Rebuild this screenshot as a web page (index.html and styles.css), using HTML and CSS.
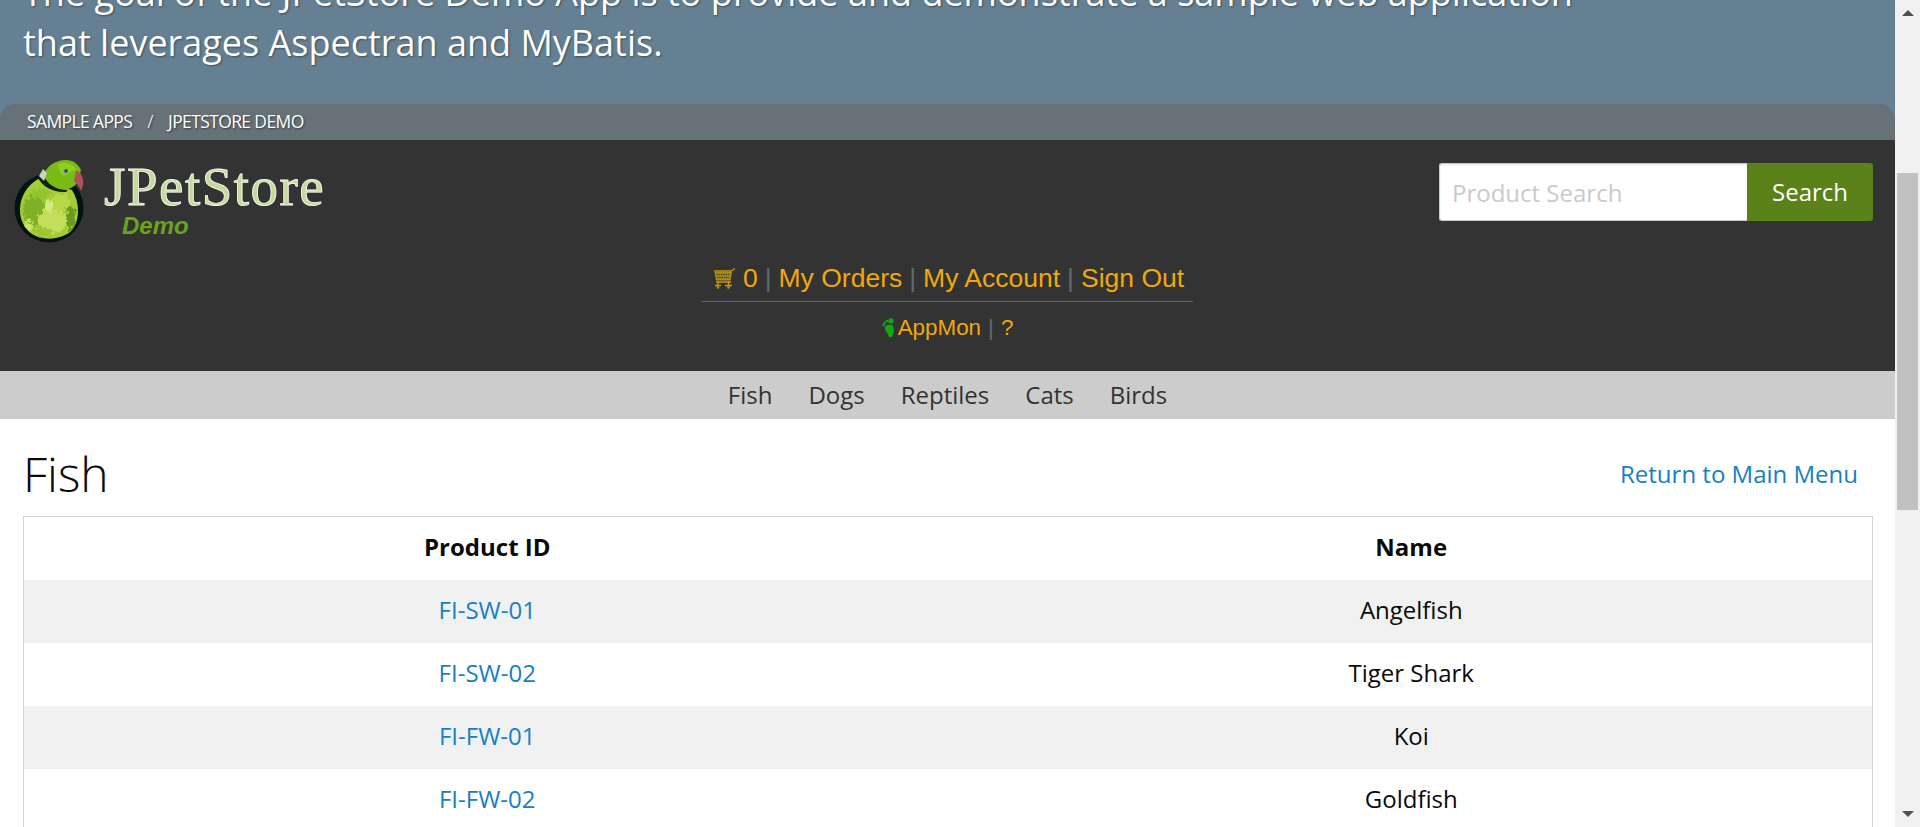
FILE: index.html
```html
<!DOCTYPE html>
<html lang="en">
<head>
<meta charset="utf-8">
<title>JPetStore Demo</title>
<link rel="stylesheet" href="styles.css">
</head>
<body>
<div class="viewport">
  <main class="page">
    <section class="hero">
      <p class="hero-text">The goal of the JPetStore Demo App is to provide and demonstrate a sample web application<br>that leverages Aspectran and MyBatis.</p>
      <nav class="crumbs"><span>SAMPLE APPS</span><span class="crumb-sep">/</span><span>JPETSTORE DEMO</span></nav>
    </section>
    <header class="masthead">
      <div class="masthead-top">
        <div class="logo">
          <svg class="parrot" width="78" height="88" viewBox="0 0 78 88" aria-hidden="true">
            <defs>
              <filter id="mottle" x="-10%" y="-10%" width="120%" height="120%">
                <feTurbulence type="fractalNoise" baseFrequency="0.28" numOctaves="2" seed="7" result="noise"/>
                <feDisplacementMap in="SourceGraphic" in2="noise" scale="11" xChannelSelector="R" yChannelSelector="G"/>
              </filter>
              <clipPath id="bodyClip">
                <path d="M6 52C6 38 13 28 24 21L58 32C66 44 66 62 58 72C50 81 30 84 18 76C10 70 6 62 6 52Z"/>
              </clipPath>
            </defs>
            <circle cx="35" cy="50" r="34.500" fill="#04130f"/>
            <g clip-path="url(#bodyClip)">
              <rect x="0" y="15" width="70" height="70" fill="#a4cc36"/>
              <g filter="url(#mottle)">
                <ellipse cx="20" cy="52" rx="11" ry="16" fill="#7fb026"/>
                <ellipse cx="38" cy="63" rx="15" ry="12" fill="#c4de5c"/>
                <ellipse cx="47" cy="44" rx="9" ry="8" fill="#b8d84a"/>
                <ellipse cx="26" cy="36" rx="9" ry="5" fill="#93c42e"/>
                <ellipse cx="15" cy="68" rx="5" ry="5" fill="#cbe26c"/>
                <ellipse cx="57" cy="60" rx="5" ry="12" fill="#6a9a1c"/>
                <ellipse cx="29" cy="74" rx="9" ry="4" fill="#9dc636"/>
                <ellipse cx="35" cy="48" rx="5" ry="6" fill="#d5e980"/>
              </g>
            </g>
            <path d="M29 19C31 9 41 2 52 2C59 2 64 6 67 12L63 25C59 31 50 33 43 30C37 28 32 24 29 19Z" fill="#78bb17"/>
            <path d="M44 6C50 4 58 5 62 11L50 18C46 15 44 11 44 6Z" fill="#8ed01e"/>
            <path d="M27 15L24 20C29 29 40 35 52 34L54 32C42 32 33 26 30 18Z" fill="#10201a"/>
            <path d="M29 11L25 18L30 23L33 15Z" fill="#c8d2c4"/>
            <path d="M62 13C67 13 70 20 69 27L67 33C65 28 62 25 60 23Z" fill="#b0525c"/>
            <circle cx="52" cy="13" r="2.300" fill="#5a6cab"/>
            <circle cx="52" cy="13" r="1" fill="#20283c"/>
          </svg>
          <div class="wordmark">
            <span class="wordmark-name">JPetStore</span>
            <span class="wordmark-demo">Demo</span>
          </div>
        </div>
        <form class="search">
          <input class="search-input" type="text" placeholder="Product Search">
          <button class="search-button" type="button">Search</button>
        </form>
      </div>
      <div class="account">
        <div class="account-main">
          <svg class="cart" width="23" height="21" viewBox="0 0 23 21" aria-hidden="true">
            <path d="M1 3H18L22 0.500" fill="none" stroke="#c69a12" stroke-width="1.300"/>
            <path d="M1.500 4H19L17.500 12.500H3Z" fill="#b08c10"/>
            <path d="M3.500 6.500H17M4 9.500H16.500" stroke="#2e4a3a" stroke-width="1.300" stroke-dasharray="1.400 0.900"/>
            <path d="M3 14H18M5 13V18M15.500 13V18M2 17.500H8M12 17.500H19" fill="none" stroke="#c69a12" stroke-width="1.300"/>
            <circle cx="5" cy="19.500" r="1.300" fill="#c69a12"/><circle cx="15.500" cy="19.500" r="1.300" fill="#c69a12"/>
          </svg>
          <a class="link" href="#">0</a><span class="sep">|</span><a class="link" href="#">My Orders</a><span class="sep">|</span><a class="link" href="#">My Account</a><span class="sep">|</span><a class="link" href="#">Sign Out</a>
        </div>
        <div class="account-sub">
          <svg class="foot" width="13" height="20" viewBox="0 0 13 20" aria-hidden="true">
            <path d="M3 8.500C4.500 6.500 9 6 10.500 7.500C12.500 10 12 14 11 16.500C10 19.500 7.500 20.500 6.500 18C6 15.500 3.800 13.500 3 11.500Z" fill="#12a812"/>
            <ellipse cx="9" cy="3" rx="2.600" ry="2.800" fill="#12a812"/>
            <circle cx="5" cy="3" r="1.300" fill="#12a812"/>
            <circle cx="2.800" cy="4.700" r="1.200" fill="#12a812"/>
            <circle cx="1.600" cy="7" r="1.200" fill="#12a812"/>
          </svg>
          <a class="link" href="#">AppMon</a><span class="sep">|</span><a class="link" href="#">?</a>
        </div>
      </div>
    </header>
    <nav class="categories">
      <a href="#">Fish</a><a href="#">Dogs</a><a href="#">Reptiles</a><a href="#">Cats</a><a href="#">Birds</a>
    </nav>
    <section class="content">
      <div class="title-row">
        <h2 class="title">Fish</h2>
        <a class="return" href="#">Return to Main Menu</a>
      </div>
      <table class="products">
        <colgroup><col class="col-id"><col></colgroup>
        <thead><tr><th>Product ID</th><th>Name</th></tr></thead>
        <tbody>
          <tr><td><a href="#">FI-SW-01</a></td><td>Angelfish</td></tr>
          <tr><td><a href="#">FI-SW-02</a></td><td>Tiger Shark</td></tr>
          <tr><td><a href="#">FI-FW-01</a></td><td>Koi</td></tr>
          <tr><td><a href="#">FI-FW-02</a></td><td>Goldfish</td></tr>
        </tbody>
      </table>
    </section>
  </main>
  <aside class="scrollbar" aria-hidden="true">
    <div class="scroll-up"></div>
    <div class="scroll-thumb"></div>
    <div class="scroll-down"></div>
  </aside>
</div>
</body>
</html>
```
FILE: styles.css
```css
* { box-sizing: border-box; }
html, body { margin: 0; height: 100%; overflow: hidden; }
body { font-family: "Open Sans", sans-serif; color: #0a0a0a; background: #fff; }
.viewport { display: flex; height: 827px; }
.page { flex: 1; min-width: 0; overflow: hidden; display: flex; flex-direction: column; }

.hero { height: 140px; flex: none; background: #648092; overflow: hidden; display: flex; flex-direction: column; justify-content: flex-end; }
.hero-text { margin: 0 0 36px; padding-left: 23px; color: #fff; font-size: 36px; line-height: 50px; text-shadow: 1px 1px 2px rgba(0,0,0,.4); white-space: nowrap; }

.crumbs { flex: none; height: 36px; display: flex; align-items: center; padding: 0 27px 2px; color: #fff; font-size: 17.5px; letter-spacing: -.62px; text-shadow: 1px 1px 2px rgba(0,0,0,.5); background: #667278; border-radius: 16px 16px 0 0; }
.crumb-sep { margin: 0 15px; opacity: .75; }

.masthead { flex: none; height: 231px; background: #333; display: flex; flex-direction: column; }
.masthead-top { display: flex; justify-content: space-between; padding: 18px 22px 0 14px; height: 112px; }
.logo { display: flex; align-items: flex-start; height: 88px; }
.parrot { flex: none; }
.wordmark { display: flex; flex-direction: column; margin-left: 12px; padding-top: 1px; }
.wordmark-name { font-family: "Liberation Serif", serif; font-size: 55px; line-height: 55px; letter-spacing: 1.5px; color: #c4d99a; -webkit-text-stroke: .9px #f6f8f0; }
.wordmark-demo { font-family: "Liberation Sans", sans-serif; font-weight: bold; font-style: italic; font-size: 24px; line-height: 24px; color: #6aa31e; margin-left: 18px; }

.search { display: flex; height: 58px; margin-top: 5px; }
.search-input { width: 308px; height: 58px; border: 1px solid #cacaca; border-right: 0; border-radius: 3px 0 0 3px; padding: 0 12px; font: 24px "Open Sans", sans-serif; background: #fff; box-shadow: inset 0 1px 2px rgba(10,10,10,.1); outline: 0; }
.search-input::placeholder { color: #cacaca; }
.search-button { width: 126px; height: 58px; border: 0; border-radius: 0 3px 3px 0; background: #5a8219; color: #fff; font: 24px "Open Sans", sans-serif; padding-bottom: 2px; }

.account { display: flex; flex-direction: column; align-items: center; }
.account-main { width: 491px; height: 50px; border-bottom: 1px solid #666; display: flex; justify-content: center; align-items: center; font-family: "Liberation Sans", sans-serif; font-size: 26.5px; padding: 3px 0 0 2px; }
.cart { margin-right: 7px; }
.account-sub { display: flex; align-items: center; justify-content: center; font-family: "Liberation Sans", sans-serif; font-size: 22.4px; margin-top: 13px; height: 25px; }
.foot { margin-right: 3px; }
.link { color: #f0a80c; text-decoration: none; }
.sep { color: #5e6b74; margin: 0 7px; }

.categories { flex: none; height: 48px; background: #ccc; display: flex; justify-content: center; align-items: center; gap: 36px; font-size: 24px; padding-bottom: 2px; }
.categories a { color: #333; text-decoration: none; }

.content { flex: 1; padding: 0 22px 0 23px; }
.title-row { display: flex; justify-content: space-between; align-items: center; height: 97px; padding: 11px 15px 0 0; }
.title { margin: 0; font-size: 48px; font-weight: 300; color: #0a0a0a; }
.return { color: #1680c4; text-decoration: none; font-size: 24px; }
.products { width: 1850px; table-layout: fixed; border-collapse: collapse; border: 1px solid #d4d4d4; font-size: 24px; }
.col-id { width: 927px; }
.products th, .products td { height: 63px; padding: 0 0 3px; text-align: center; }
.products th { font-weight: 700; padding: 0 0 4px; }
.products tbody tr:nth-child(odd) { background: #f1f1f1; }
.products a { color: #1680c4; text-decoration: none; }

.scrollbar { flex: none; width: 25px; background: #f1f1f1; display: flex; flex-direction: column; align-items: center; padding: 10px 0; }
.scroll-up { border-left: 6px solid transparent; border-right: 6px solid transparent; border-bottom: 6px solid #505050; }
.scroll-thumb { width: 21px; height: 337px; margin-top: 157px; background: #c1c1c1; }
.scroll-down { margin-top: auto; border-left: 6px solid transparent; border-right: 6px solid transparent; border-top: 6px solid #505050; }
```
